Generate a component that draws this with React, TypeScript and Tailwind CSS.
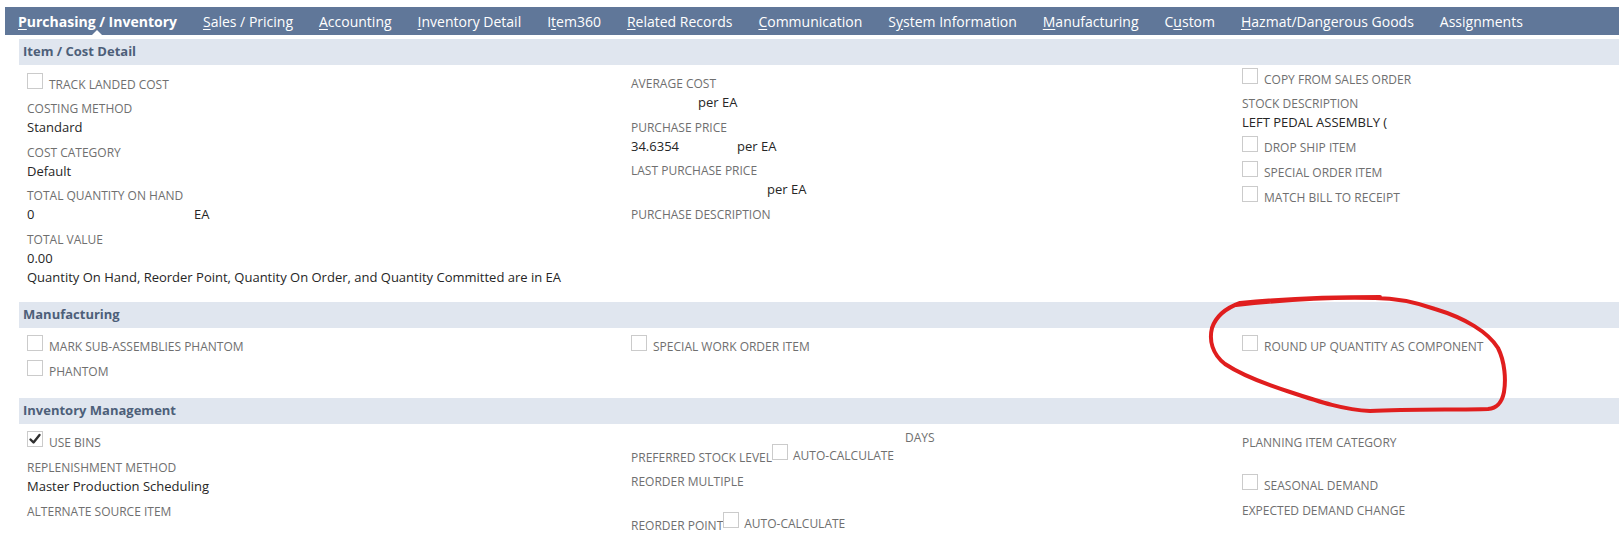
import React from 'react'

type TabDef = { label: string; key?: number; active?: boolean }

const tabs: TabDef[] = [
	{ label: 'Purchasing / Inventory', key: 0, active: true },
	{ label: 'Sales / Pricing', key: 0 },
	{ label: 'Accounting', key: 0 },
	{ label: 'Inventory Detail', key: 0 },
	{ label: 'Item360', key: 1 },
	{ label: 'Related Records', key: 0 },
	{ label: 'Communication', key: 0 },
	{ label: 'System Information', key: 1 },
	{ label: 'Manufacturing', key: 0 },
	{ label: 'Custom', key: 1 },
	{ label: 'Hazmat/Dangerous Goods', key: 0 },
	{ label: 'Assignments' },
]

function Tab({ tab }: { tab: TabDef }) {
	const { label, key } = tab
	return (
		<div
			className={`relative px-[13px] h-full flex items-center text-[14px] text-white ${
				tab.active ? 'font-bold' : 'font-normal'
			}`}
		>
			{key === undefined ? (
				label
			) : (
				<span>
					{label.slice(0, key)}
					<span className='underline underline-offset-[2px]'>{label[key]}</span>
					{label.slice(key + 1)}
				</span>
			)}
			{tab.active && (
				<span className='absolute bottom-0 left-1/2 -translate-x-1/2 w-0 h-0 border-x-[5px] border-x-transparent border-b-[5px] border-b-white'></span>
			)}
		</div>
	)
}

function Box({ checked }: { checked?: boolean }) {
	return (
		<span className='shrink-0 w-4 h-4 border border-[#cbcbcb] bg-white flex items-center justify-center'>
			{checked && (
				<svg width='14' height='14' viewBox='0 0 14 14'>
					<path
						d='M2.5 7.5 L5.5 10.5 L11.5 3'
						fill='none'
						stroke='#2f2f2f'
						strokeWidth='2.4'
						strokeLinecap='round'
						strokeLinejoin='round'
					/>
				</svg>
			)}
		</span>
	)
}

function CheckRow({ label, checked, className = '' }: { label: string; checked?: boolean; className?: string }) {
	return (
		<div className={`flex items-start h-[25px] ${className}`}>
			<Box checked={checked} />
			<span className='ml-[6px] pt-[4px] leading-[16px] text-[12px] text-[#6f6f6f] uppercase'>{label}</span>
		</div>
	)
}

function Field({
	label,
	children,
	className = '',
}: {
	label: string
	children?: React.ReactNode
	className?: string
}) {
	return (
		<div className={`pt-[2px] pb-[5.5px] ${className}`}>
			<div className='leading-[18px] text-[12px] text-[#6f6f6f] uppercase'>{label}</div>
			<div className='leading-[18px] min-h-[18px] text-[13px] text-[#262626] flex'>{children}</div>
		</div>
	)
}

function AutoRow({ label, className = '' }: { label: string; className?: string }) {
	return (
		<div className={`flex items-start h-[22px] ${className}`}>
			<span className='pt-[6px] leading-[16px] text-[12px] text-[#6f6f6f] uppercase'>{label}</span>
			<Box />
			<span className='ml-[5px] pt-[4px] leading-[16px] text-[12px] text-[#6f6f6f] uppercase'>Auto-Calculate</span>
		</div>
	)
}

function SectionHeader({ title }: { title: string }) {
	return (
		<div className='h-[26px] bg-[#e0e6ef] flex items-center pl-[4px] text-[13px] font-bold text-[#4d5f79]'>
			{title}
		</div>
	)
}

export default function App() {
	return (
		<div className="relative h-[534px] overflow-hidden bg-white font-['Open_Sans',sans-serif]">
			{/* Subtab bar */}
			<div className='pt-[7px] pl-[5px]'>
				<div className='h-[28px] bg-[#607799] flex'>
					{tabs.map(tab => (
						<Tab key={tab.label} tab={tab} />
					))}
				</div>
			</div>

			<div className='pt-[4px] pl-[19px]'>
				{/* Item / Cost Detail */}
				<SectionHeader title='Item / Cost Detail' />
				<div className='grid grid-cols-[604px_611px_1fr] pl-[8px] pb-[16px]'>
					<div className='pt-[8px]'>
						<CheckRow label='Track Landed Cost' />
						<Field label='Costing Method'>Standard</Field>
						<Field label='Cost Category'>Default</Field>
						<Field label='Total Quantity On Hand'>
							<span className='w-[167px]'>0</span>
							<span>EA</span>
						</Field>
						<Field label='Total Value'>0.00</Field>
						<div className='-mt-[4px] leading-[18px] text-[13px] text-[#262626]'>
							Quantity On Hand, Reorder Point, Quantity On Order, and Quantity Committed are in EA
						</div>
					</div>
					<div className='pt-[8px]'>
						<Field label='Average Cost'>
							<span className='ml-[67px]'>per EA</span>
						</Field>
						<Field label='Purchase Price'>
							<span className='w-[106px]'>34.6354</span>
							<span>per EA</span>
						</Field>
						<Field label='Last Purchase Price'>
							<span className='ml-[136px]'>per EA</span>
						</Field>
						<Field label='Purchase Description' />
					</div>
					<div className='pt-[3px]'>
						<CheckRow label='Copy From Sales Order' />
						<Field label='Stock Description' className='-mb-[1px]'>
							LEFT PEDAL ASSEMBLY (
						</Field>
						<CheckRow label='Drop Ship Item' />
						<CheckRow label='Special Order Item' />
						<CheckRow label='Match Bill To Receipt' />
					</div>
				</div>

				{/* Manufacturing */}
				<SectionHeader title='Manufacturing' />
				<div className='grid grid-cols-[604px_611px_1fr] pl-[8px] pt-[7px] pb-[13px]'>
					<div>
						<CheckRow label='Mark Sub-Assemblies Phantom' />
						<CheckRow label='Phantom' />
					</div>
					<div>
						<CheckRow label='Special Work Order Item' />
					</div>
					<div>
						<CheckRow label='Round Up Quantity As Component' />
					</div>
				</div>

				{/* Inventory Management */}
				<SectionHeader title='Inventory Management' />
				<div className='grid grid-cols-[604px_611px_1fr] pl-[8px]'>
					<div className='pt-[7px]'>
						<CheckRow label='Use Bins' checked />
						<Field label='Replenishment Method' className='mt-[1px]'>
							Master Production Scheduling
						</Field>
						<Field label='Alternate Source Item' />
					</div>
					<div>
						<div className='pt-[6px] h-[22px] leading-[16px] pl-[274px] text-[12px] text-[#6f6f6f]'>DAYS</div>
						<AutoRow label='Preferred Stock Level' className='-mt-[2px]' />
						<div className='mt-[7px] leading-[18px] text-[12px] text-[#6f6f6f] uppercase'>Reorder Multiple</div>
						<AutoRow label='Reorder Point' className='mt-[21px]' />
					</div>
					<div className='pt-[10px]'>
						<div className='leading-[18px] text-[12px] text-[#6f6f6f] uppercase'>Planning Item Category</div>
						<div className='h-[18px]'></div>
						<CheckRow label='Seasonal Demand' className='mt-[4px]' />
						<div className='mt-[3px] leading-[18px] text-[12px] text-[#6f6f6f] uppercase'>Expected Demand Change</div>
					</div>
				</div>
			</div>

			{/* Red hand-drawn annotation */}
			<svg
				className='absolute inset-0 pointer-events-none'
				width='1619'
				height='534'
				viewBox='0 0 1619 534'
			>
				<path
					d='M1236 305 C1290 299 1340 297 1375 298 C1400 298 1418 303 1435 309 C1465 318 1488 332 1498 348 C1505 362 1506 380 1504 392 C1502 402 1498 408 1488 409 C1460 410 1410 409 1370 411 C1345 410 1320 402 1290 392 C1265 384 1240 374 1225 364 C1212 354 1209 340 1212 328 C1216 316 1226 308 1240 303 C1280 299 1330 297 1380 297'
					fill='none'
					stroke='#e01e1e'
					strokeWidth='4'
					strokeLinecap='round'
					strokeLinejoin='round'
				/>
			</svg>
		</div>
	)
}
